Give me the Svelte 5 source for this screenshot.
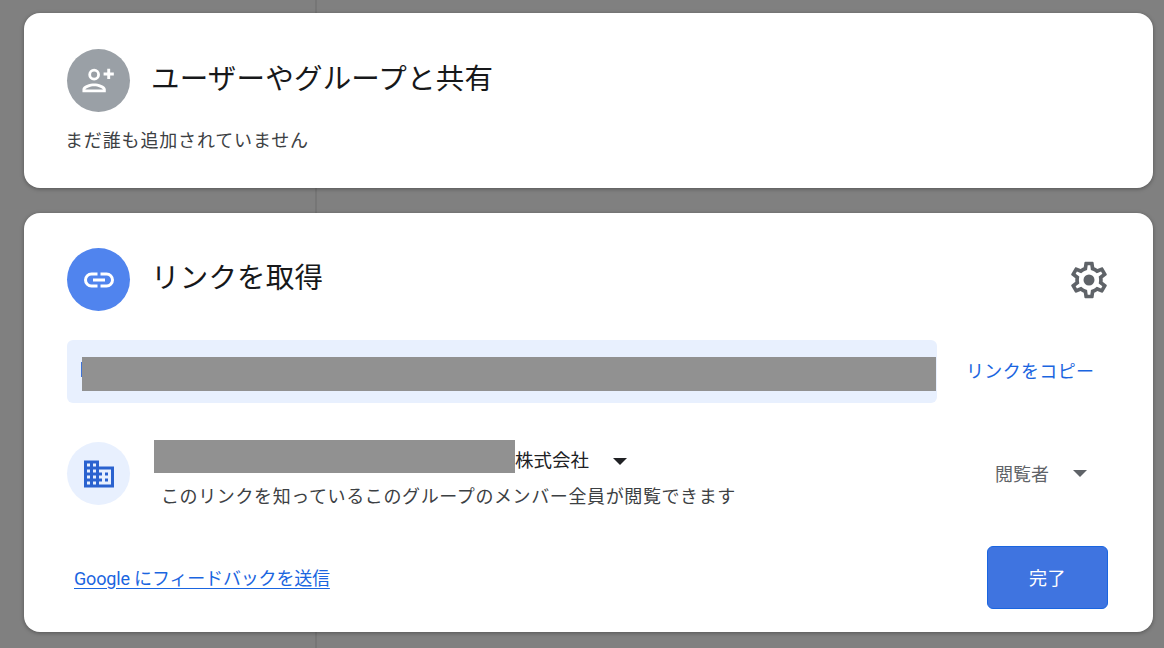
<script lang="ts">
  const font = 'share';
</script>

<main class="page {font}">
  <div class="backdrop-line"></div>

  <section class="card people">
    <header class="head">
      <div class="avatar grey">
        <svg viewBox="0 0 24 24" width="35" height="35" fill="#fff">
          <path d="M9 12a4 4 0 1 0 0-8 4 4 0 0 0 0 8zm0-6.100a2.100 2.100 0 1 1 0 4.200 2.100 2.100 0 0 1 0-4.200zM9 14c-2.700 0-8 1.300-8 4v2h16v-2c0-2.700-5.300-4-8-4zm-6 4.100c.2-.7 3.300-2.200 6-2.200s5.800 1.500 6 2.200H3z" />
          <path d="M18 11V8.500h-2.500v-2H18V4h2v2.500h2.500v2H20V11z" />
        </svg>
      </div>
      <h2>ユーザーやグループと共有</h2>
    </header>
    <p class="empty">まだ誰も追加されていません</p>
  </section>

  <section class="card link">
    <header class="head">
      <div class="avatar blue">
        <svg viewBox="0 0 24 24" width="36" height="36" fill="#fff">
          <path d="M17 7h-4v2h4a3 3 0 0 1 0 6h-4v2h4a5 5 0 0 0 0-10zm-6 8H7a3 3 0 0 1 0-6h4V7H7a5 5 0 0 0 0 10h4v-2zm-3-4h8v2H8z" />
        </svg>
      </div>
      <h2>リンクを取得</h2>
      <svg class="gear" viewBox="0 0 24 24" width="44" height="44" fill="#5f6368">
        <path d="M19.430 12.980c.04-.32.07-.64.07-.98s-.03-.66-.07-.98l2.110-1.650c.19-.15.24-.42.12-.64l-2-3.460c-.12-.22-.39-.3-.61-.22l-2.490 1c-.52-.4-1.080-.73-1.690-.98l-.38-2.650A.488.488 0 0 0 14 2h-4c-.25 0-.46.18-.49.42l-.38 2.650c-.61.25-1.170.59-1.690.98l-2.490-1c-.23-.09-.49 0-.61.22l-2 3.460c-.13.22-.07.49.12.64l2.110 1.650c-.04.32-.07.65-.07.98s.03.66.07.98l-2.110 1.650c-.19.15-.24.42-.12.64l2 3.460c.12.22.39.3.61.22l2.490-1c.52.4 1.080.73 1.690.98l.38 2.650c.03.24.24.42.49.42h4c.25 0 .46-.18.49-.42l.38-2.650c.61-.25 1.170-.59 1.690-.98l2.490 1c.23.09.49 0 .61-.22l2-3.460c.12-.22.07-.49-.12-.64l-2.110-1.650zm-1.980-1.710c.04.31.05.52.05.73s-.02.43-.05.73l-.14 1.130.89.7 1.080.84-.7 1.210-1.270-.51-1.040-.42-.9.68c-.43.32-.84.56-1.250.73l-1.060.43-.16 1.130-.2 1.350h-1.400l-.19-1.350-.16-1.130-1.060-.43c-.43-.18-.83-.41-1.230-.71l-.91-.7-1.060.43-1.270.51-.7-1.210 1.080-.84.89-.7-.14-1.130c-.03-.31-.05-.54-.05-.74s.02-.43.05-.73l.14-1.130-.89-.7-1.080-.84.7-1.210 1.270.51 1.040.42.9-.68c.43-.32.84-.56 1.250-.73l1.060-.43.16-1.130.2-1.350h1.390l.19 1.350.16 1.130 1.060.43c.43.18.83.41 1.230.71l.91.7 1.060-.43 1.270-.51.7 1.210-1.070.85-.89.7.14 1.130z" />
        <circle cx="12" cy="12" r="3" />
      </svg>
    </header>

    <div class="url-row">
      <div class="url">
        <span class="caret"></span>
        <span class="redact url-redact"></span>
      </div>
      <span class="copy">リンクをコピー</span>
    </div>

    <div class="org-row">
      <div class="avatar pale">
        <svg viewBox="0 0 24 24" width="36" height="36" fill="#2a62cf">
          <path d="M12 7V3H2v18h20V7H12zM6 19H4v-2h2v2zm0-4H4v-2h2v2zm0-4H4V9h2v2zm0-4H4V5h2v2zm4 12H8v-2h2v2zm0-4H8v-2h2v2zm0-4H8V9h2v2zm0-4H8V5h2v2zm10 12h-8v-2h2v-2h-2v-2h2v-2h-2V9h8v10zm-2-8h-2v2h2v-2zm0 4h-2v2h2v-2z" />
        </svg>
      </div>
      <div class="org-text">
        <div class="org-name">
          <span class="redact org-redact"></span>
          <span>株式会社</span>
          <span class="arrow dark"></span>
        </div>
        <p>このリンクを知っているこのグループのメンバー全員が閲覧できます</p>
      </div>
      <div class="role">
        <span>閲覧者</span>
        <span class="arrow"></span>
      </div>
    </div>

    <footer class="foot">
      <span class="feedback">Google にフィードバックを送信</span>
      <button type="button">完了</button>
    </footer>
  </section>
</main>

<style>
  :global(body) {
    margin: 0;
    background: #808080;
  }

  .page {
    position: relative;
    box-sizing: border-box;
    width: 1164px;
    height: 648px;
    padding: 13px 11px 16px 24px;
    overflow: hidden;
    display: flex;
    flex-direction: column;
    gap: 25px;
    background: #808080;
    font-family: Roboto, "Noto Sans CJK JP", sans-serif;
  }

  .backdrop-line {
    position: absolute;
    left: 315px;
    top: 0;
    bottom: 0;
    width: 2px;
    background: #767676;
  }

  .card {
    position: relative;
    box-sizing: border-box;
    background: #fff;
    border-radius: 16px;
    box-shadow: 0 1px 4px rgba(0, 0, 0, 0.35);
    padding: 36px 43px 0;
  }

  .people {
    height: 175px;
  }

  .link {
    height: 419px;
    padding-top: 35px;
    display: flex;
    flex-direction: column;
  }

  .head {
    display: flex;
    align-items: center;
    gap: 21px;
    height: 63px;
  }

  h2 {
    margin: 0 0 8px 0;
    font-size: 28.500px;
    font-weight: 400;
    letter-spacing: 0.2px;
    color: #17181a;
  }

  .avatar {
    flex: none;
    width: 63px;
    height: 63px;
    border-radius: 50%;
    display: flex;
    align-items: center;
    justify-content: center;
  }

  .grey {
    background: #9aa0a6;
  }

  .blue {
    background: #5084ee;
  }

  .pale {
    background: #e8f0fe;
  }

  .empty {
    margin: 15px 0 0 -2px;
    font-size: 18px;
    line-height: 27px;
    letter-spacing: 0.85px;
    color: #3c4043;
  }

  .gear {
    margin-left: auto;
    margin-right: -1px;
    margin-top: 1px;
  }

  .url-row {
    display: flex;
    align-items: center;
    margin-top: 29px;
  }

  .url {
    position: relative;
    width: 870px;
    height: 63px;
    border-radius: 6px;
    background: #e8f0fe;
  }

  .caret {
    position: absolute;
    left: 14px;
    top: 22px;
    width: 2px;
    height: 15px;
    background: #3f73d6;
  }

  .redact {
    position: absolute;
    background: #919191;
  }

  .url-redact {
    left: 15px;
    top: 17px;
    width: 854px;
    height: 34px;
  }

  .copy {
    margin: 0 0 4px 29px;
    font-size: 18px;
    letter-spacing: 0.33px;
    color: #1a65e0;
  }

  .org-row {
    display: flex;
    margin-top: 39px;
  }

  .org-text {
    position: relative;
    margin-left: 24px;
    width: 841px;
  }

  .org-name {
    display: flex;
    align-items: center;
    padding-left: 361px;
    height: 39px;
    font-size: 18.500px;
    line-height: 35px;
    color: #202124;
  }

  .org-redact {
    left: 0;
    top: -2px;
    width: 361px;
    height: 33px;
  }

  .org-name .arrow {
    margin-left: 24px;
  }

  .org-text p {
    margin: 3px 0 0 7px;
    font-size: 18px;
    line-height: 26px;
    letter-spacing: 0.61px;
    color: #3c4043;
    white-space: nowrap;
  }

  .role {
    display: flex;
    align-items: center;
    height: 64px;
    margin-top: -1px;
    font-size: 18px;
    color: #5f6368;
    white-space: nowrap;
  }

  .role .arrow {
    margin-left: 24px;
  }

  .arrow {
    display: inline-block;
    width: 0;
    height: 0;
    border-left: 7px solid transparent;
    border-right: 7px solid transparent;
    border-top: 7px solid #5f6368;
  }

  .arrow.dark {
    border-top-color: #202124;
  }

  .foot {
    display: flex;
    align-items: center;
    justify-content: space-between;
    margin-top: 36px;
    padding: 0 2px 0 7px;
  }

  .feedback {
    margin-bottom: 2px;
    font-size: 18px;
    letter-spacing: -0.17px;
    color: #1a65e0;
    text-decoration: underline;
    text-underline-offset: 3px;
  }

  button {
    width: 121px;
    height: 63px;
    padding-bottom: 3px;
    border: 1px solid #1a65e0;
    border-radius: 6px;
    background: #3f74e0;
    color: #fff;
    font: inherit;
    font-size: 18px;
    letter-spacing: 0.5px;
  }
</style>
